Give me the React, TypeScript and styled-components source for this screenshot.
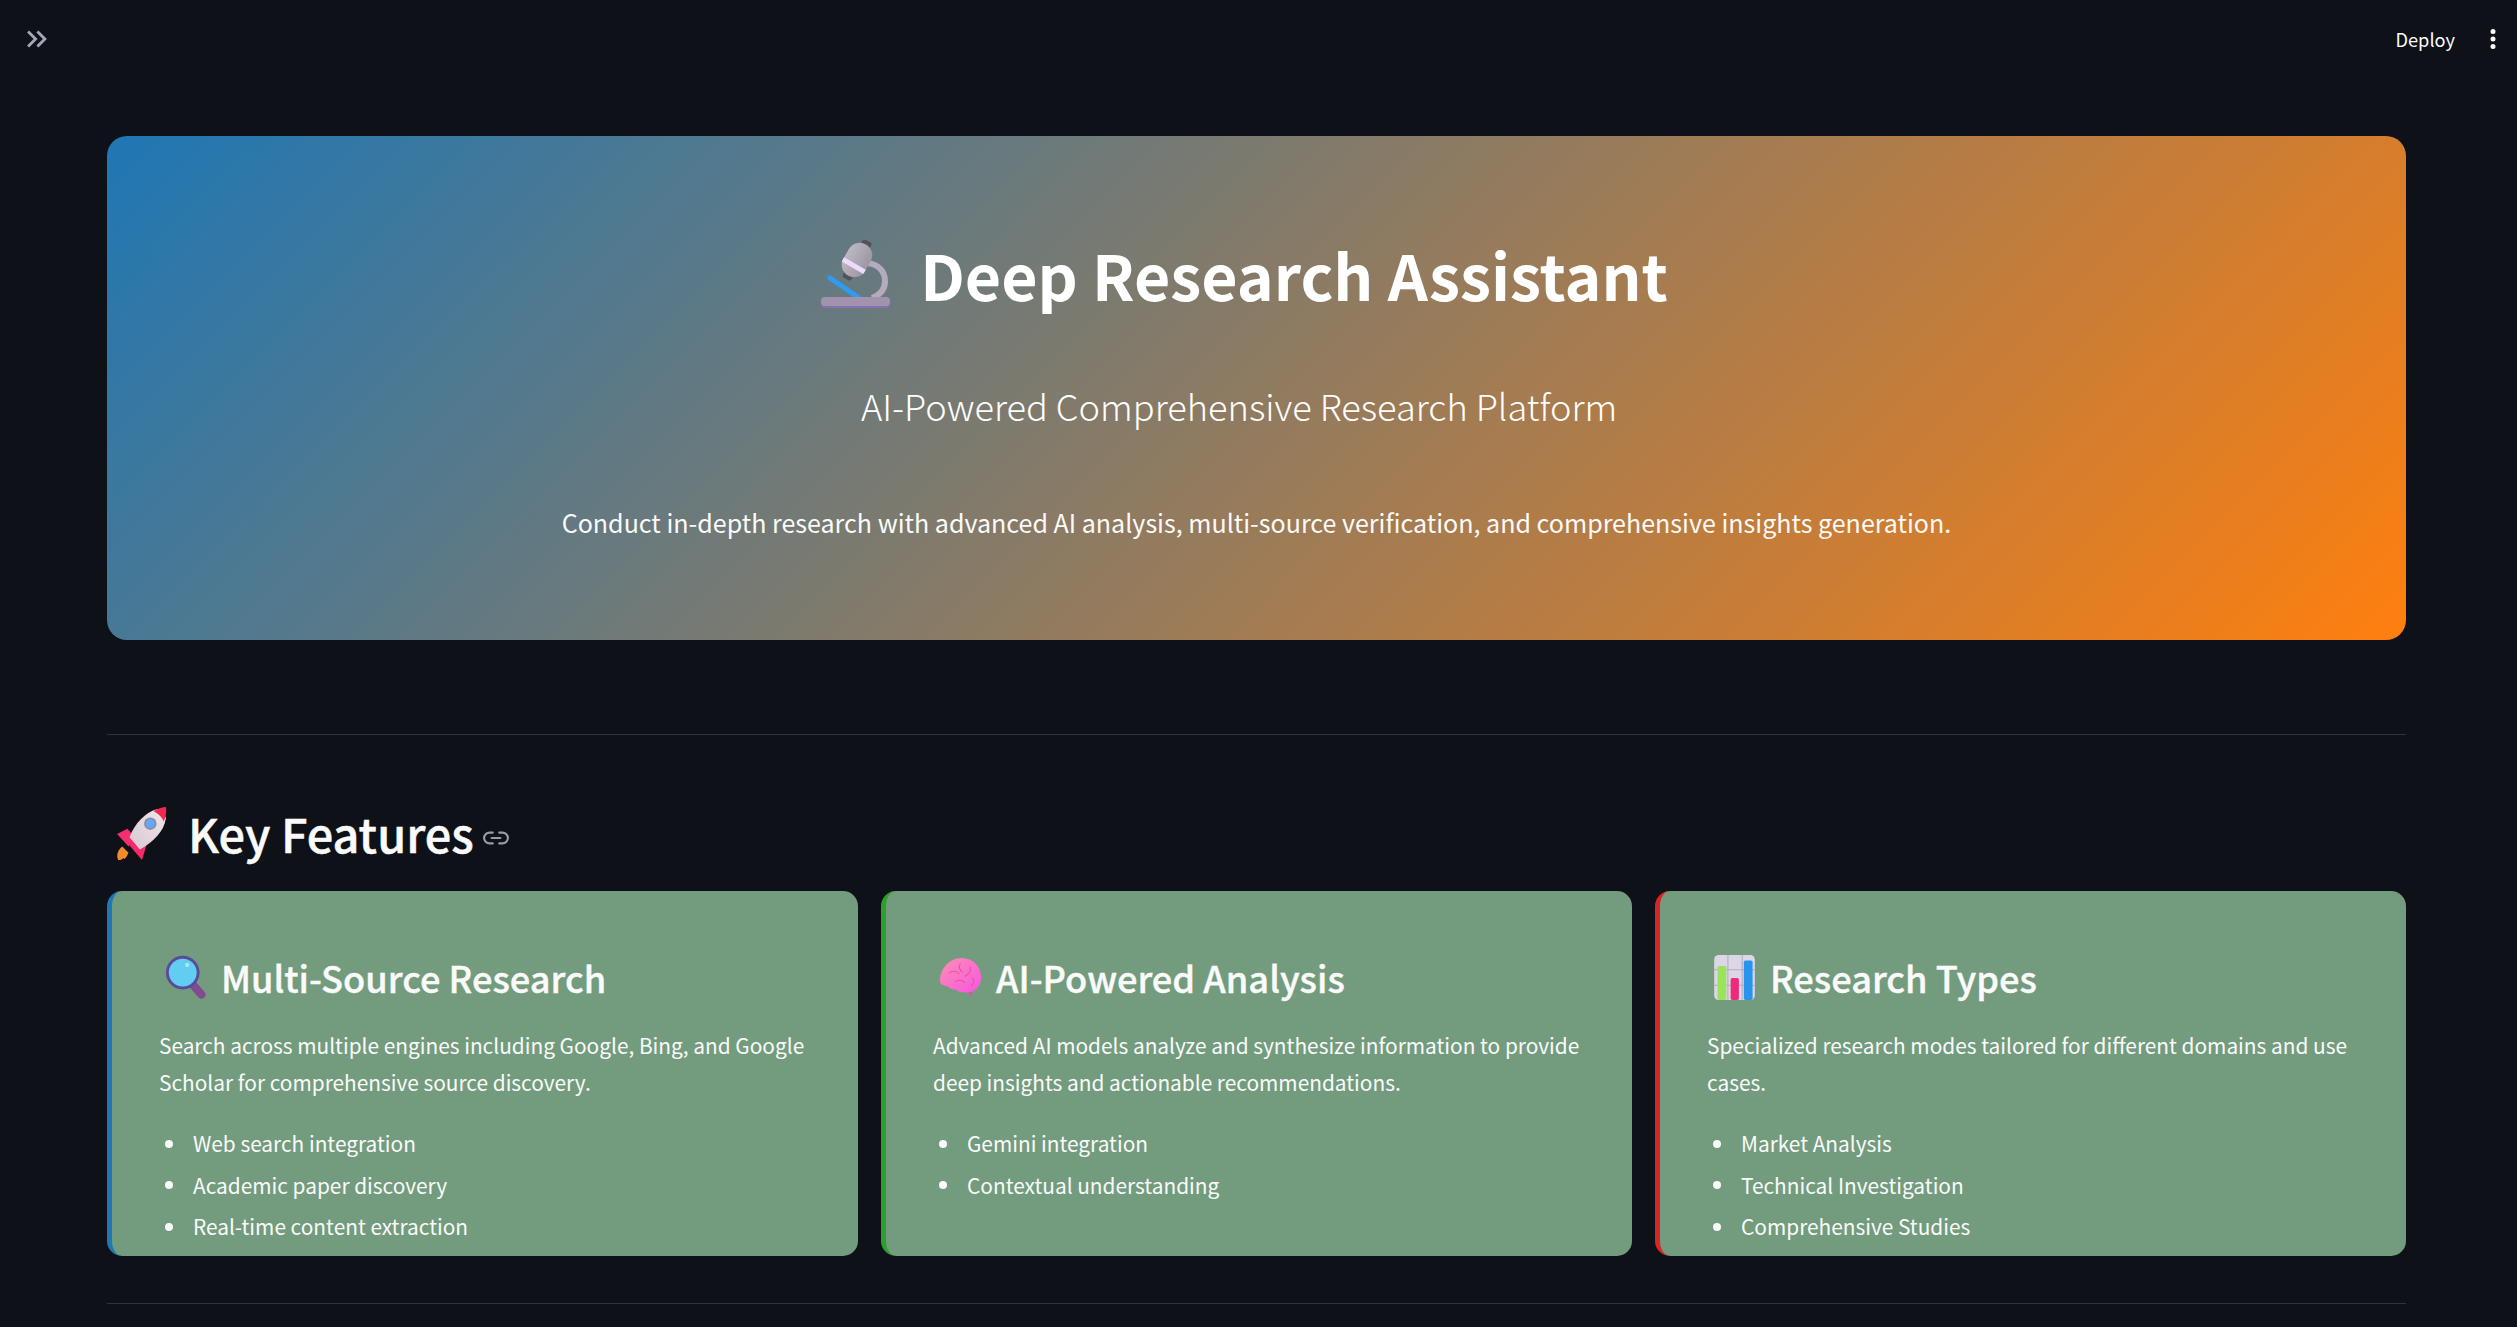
import React from "react";
import styled, { createGlobalStyle } from "styled-components";

const Global = createGlobalStyle`
  html, body { margin: 0; padding: 0; height: 100%; overflow: hidden; background: #0e1117; }
  body { font-family: "Noto Sans CJK SC", "Noto Sans", sans-serif; color: #fafafa; }
`;
const Page = styled.div`height: 1327px; overflow: hidden; background: #0e1117;`;
const Header = styled.header`
  height: 136px; box-sizing: border-box; display: flex; justify-content: space-between; align-items: flex-start;
  padding: 22px 19px 0 20px;
`;
const IconBtn = styled.button`border: 0; background: none; padding: 0; display: flex; color: inherit;`;
const Actions = styled.div`display: flex; align-items: center; gap: 33px;`;
const DeployBtn = styled.button`
  border: 0; background: none; padding: 0; color: #fafafa; font: 400 18.2px/34px "Noto Sans CJK SC", sans-serif;
`;
const Main = styled.main`padding: 0 111px 0 107px;`;
const Hero = styled.section`
  height: 504px; box-sizing: border-box; border-radius: 20px; padding-top: 96px; text-align: center; color: #fff;
  background: linear-gradient(135deg, #1f77b4 0%, #ff7f0e 100%);
`;
const HeroTitle = styled.h1`
  margin: 0; display: flex; justify-content: center; align-items: center; gap: 29px; padding-right: 24px;
  font-size: 62.6px; line-height: 84px; font-weight: 700;
`;
const Subtitle = styled.p`
  margin: 62px 0 0; padding-right: 35px; font-size: 36.2px; line-height: 54px; font-weight: 300;
`;
const Description = styled.p`margin: 68px 0 0; font-size: 25.05px; line-height: 44px; color: #fafafa;`;
const Rule = styled.hr`border: 0; height: 1px; background: #31333b; margin: ${p => p.$top}px 0 0;`;
const SectionTitle = styled.h2`
  margin: 66px 0 0; display: flex; align-items: center; height: 64px; font-size: 46.8px; line-height: 64px; font-weight: 500;
  -webkit-text-stroke: 0.5px #fafafa;
`;
const SectionEmoji = styled.span`display: flex; margin: 0 20px 0 9px;`;
const LinkMark = styled.span`display: flex; margin: 9px 0 0 9px; color: #9a9ca3; -webkit-text-stroke: 0;`;
const Cards = styled.div`display: grid; grid-template-columns: repeat(3, 1fr); gap: 23px; margin-top: 26px;`;
const Card = styled.article`
  height: 365px; box-sizing: border-box; overflow: hidden; background: #739c7e; border-radius: 15px;
  border-left: 5px solid ${p => p.$accent}; padding: 0 37px 0 47px;
`;
const CardTitle = styled.h3`
  margin: 62px 0 0; height: 48px; display: flex; align-items: center; gap: 15px; font-size: 36.2px; line-height: 48px; font-weight: 500;
  -webkit-text-stroke: 0.4px #fafafa;
`;
const CardEmoji = styled.span`display: flex; margin-left: ${p => p.$offset}px;`;
const CardText = styled.p`margin: 26px 0 0; font-size: 20.85px; line-height: 37px;`;
const Points = styled.ul`margin: 24px 0 0; padding: 0 0 0 34px; font-size: 20.85px; list-style: none;`;
const Point = styled.li`
  position: relative; line-height: 36px; margin-bottom: 5.5px;
  &::before {
    content: ""; position: absolute; left: -28px; top: 14.5px; width: 8px; height: 8px; border-radius: 50%; background: #fafafa;
  }
`;

const Microscope = () => (
  <svg width="70" height="68" viewBox="0 0 70 68">
    <defs>
      <linearGradient id="ms" x1="0" y1="0" x2="1" y2="0"><stop offset="0" stopColor="#bdb7c2" /><stop offset="1" stopColor="#9d97a3" /></linearGradient>
    </defs>
    <path d="M46 23c12 1 18 9 18 18 0 8-5 14-13 17" fill="none" stroke="#b4abbd" strokeWidth="6" />
    <path d="M9 38l29 20" stroke="#2e9cf0" strokeWidth="5" strokeLinecap="round" />
    <rect x="0" y="57" width="69" height="11" rx="4" fill="#8b6fb2" />
    <rect x="0" y="57" width="69" height="9" rx="4" fill="#a193ad" />
    <g transform="rotate(30 36 20)">
      <rect x="31" y="-2" width="10" height="10" rx="2" fill="#55505a" />
      <rect x="31" y="34" width="10" height="8" rx="3" fill="#55505a" />
      <rect x="23.500" y="2" width="25" height="36" rx="12.500" fill="url(#ms)" />
      <rect x="23.500" y="24" width="25" height="5" fill="#ecdcfa" />
    </g>
  </svg>
);
const Rocket = () => (
  <svg width="52" height="54" viewBox="0 0 50 52">
    <defs>
      <linearGradient id="rb" x1="0" y1="1" x2="1" y2="0"><stop offset="0" stopColor="#d8c8d2" /><stop offset="1" stopColor="#efe6ea" /></linearGradient>
    </defs>
    <path d="M2 52c-2-5 0-10 4-13l6 6c-1 2-2 5-4 6-1-1-1-1-2 0-1 1-2 1-4 1z" fill="#f58a2c" />
    <path d="M1 27l10-5 8 9-7 8z" fill="#f42e6f" />
    <path d="M13 38l10-15 8 9-6 20z" fill="#f72a6a" />
    <path d="M13 30C18 17 28 6 40 3c5 2 7 5 8 9-2 13-12 22-25 30z" fill="url(#rb)" />
    <path d="M36 5c5-3 9-4 12-4 1 4 0 9-2 14-2-5-6-8-10-10z" fill="#f2274f" />
    <circle cx="33" cy="17" r="6" fill="#8d8a9a" />
    <circle cx="33" cy="17" r="4.4" fill="#62a8fa" />
  </svg>
);
const Magnifier = () => (
  <svg width="41" height="44" viewBox="0 0 37 40">
    <path d="M26 28l7 8" stroke="#7f4b91" strokeWidth="7.5" strokeLinecap="round" />
    <circle cx="16" cy="16" r="14" fill="#62cdf0" stroke="#5a4a9c" strokeWidth="2.6" />
    <circle cx="20" cy="9" r="2" fill="#a9e4f8" />
  </svg>
);
const Brain = () => (
  <svg width="41" height="39" viewBox="0 0 38 36">
    <defs>
      <linearGradient id="br" x1="0" y1="0" x2="1" y2="1"><stop offset="0" stopColor="#fb8fb4" /><stop offset="1" stopColor="#fb55e0" /></linearGradient>
    </defs>
    <path d="M27 31l1 5 2-5z" fill="#f23fc8" />
    <path d="M0 21C0 11 8 0 20 0c11 0 18 8 18 18 0 8-5 14-14 14-4 0-8-1-10-3-3 0-5-1-7-3-4 0-7-2-7-5z" fill="url(#br)" />
    <path d="M8 14c4-3 8-2 10 1M19 5c-2 3-1 6 2 8M28 8c1 4-1 7-5 9M14 22c3-2 7-2 9 1M30 18c2 3 1 6-1 8" fill="none" stroke="#d85aa8" strokeWidth="1" />
  </svg>
);
const Chart = () => (
  <svg width="41" height="45" viewBox="0 0 37 41">
    <rect width="37" height="41" rx="4" fill="#dcd6e6" />
    <path d="M12.500 0v41M25.500 0v41M0 13.500h37M0 27.500h37" stroke="#b3acbc" strokeWidth="1" />
    <rect x="3" y="10" width="8" height="31" rx="1.500" fill="#9ae35a" />
    <rect x="15" y="21" width="7.500" height="20" rx="1.500" fill="#ee2a7a" />
    <rect x="27" y="5" width="8" height="36" rx="1.500" fill="#2a93ee" />
  </svg>
);
const ChevronsIcon = () => (
  <svg width="34" height="34" viewBox="0 0 24 24" fill="#a3a8b4">
    <path d="M6.410 6L5 7.410 9.580 12 5 16.590 6.410 18l6-6z" />
    <path d="M13 6l-1.410 1.410L16.170 12l-4.580 4.590L13 18l6-6z" />
  </svg>
);
const KebabIcon = () => (
  <svg width="10" height="24" viewBox="0 0 10 24" fill="#fafafa">
    <circle cx="5" cy="4.500" r="2.500" /><circle cx="5" cy="12" r="2.500" /><circle cx="5" cy="19.500" r="2.500" />
  </svg>
);
const LinkIcon = () => (
  <svg width="26" height="26" viewBox="0 0 24 24" fill="none" stroke="currentColor" strokeWidth="2" strokeLinecap="round" strokeLinejoin="round">
    <path d="M15 7h3a5 5 0 0 1 0 10h-3M9 17H6A5 5 0 0 1 6 7h3M8 12h8" />
  </svg>
);

const features = [
  { accent: "#1f77b4", offset: 6, Emoji: Magnifier, title: "Multi-Source Research",
    text: "Search across multiple engines including Google, Bing, and Google Scholar for comprehensive source discovery.",
    items: ["Web search integration", "Academic paper discovery", "Real-time content extraction"] },
  { accent: "#2ca02c", offset: 7, Emoji: Brain, title: "AI-Powered Analysis",
    text: "Advanced AI models analyze and synthesize information to provide deep insights and actionable recommendations.",
    items: ["Gemini integration", "Contextual understanding"] },
  { accent: "#d62728", offset: 7, Emoji: Chart, title: "Research Types",
    text: "Specialized research modes tailored for different domains and use cases.",
    items: ["Market Analysis", "Technical Investigation", "Comprehensive Studies"] },
];

export default function App() {
  return (
    <Page>
      <Global />
      <Header>
        <IconBtn aria-label="Expand sidebar"><ChevronsIcon /></IconBtn>
        <Actions>
          <DeployBtn>Deploy</DeployBtn>
          <IconBtn aria-label="Menu"><KebabIcon /></IconBtn>
        </Actions>
      </Header>
      <Main>
        <Hero>
          <HeroTitle><Microscope />Deep Research Assistant</HeroTitle>
          <Subtitle>AI-Powered Comprehensive Research Platform</Subtitle>
          <Description>Conduct in-depth research with advanced AI analysis, multi-source verification, and comprehensive insights generation.</Description>
        </Hero>
        <Rule $top={94} />
        <SectionTitle>
          <SectionEmoji><Rocket /></SectionEmoji>Key Features<LinkMark><LinkIcon /></LinkMark>
        </SectionTitle>
        <Cards>
          {features.map(({ accent, offset, Emoji, title, text, items }) => (
            <Card key={title} $accent={accent}>
              <CardTitle><CardEmoji $offset={offset}><Emoji /></CardEmoji>{title}</CardTitle>
              <CardText>{text}</CardText>
              <Points>{items.map(item => <Point key={item}>{item}</Point>)}</Points>
            </Card>
          ))}
        </Cards>
        <Rule $top={47} />
      </Main>
    </Page>
  );
}
